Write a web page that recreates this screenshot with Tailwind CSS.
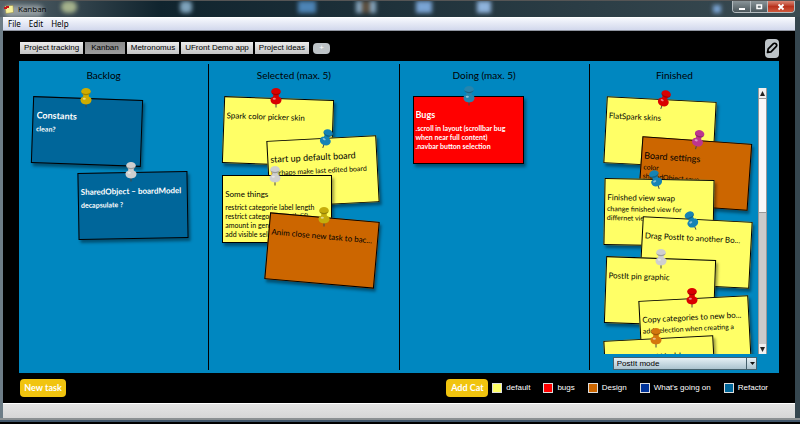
<!DOCTYPE html>
<html lang="en">
<head>
<meta charset="utf-8">
<meta name="viewport" content="width=device-width, initial-scale=1">
<title>Kanban</title>
<script src="https://cdn.jsdelivr.net/npm/@tailwindcss/browser@4"></script>
</head>
<body class="min-h-screen flex flex-col bg-[#14252f] font-['Liberation_Sans',Arial,sans-serif] text-[8px] leading-[10px] text-black">

<svg class="hidden" aria-hidden="true">
  <defs>
    <linearGradient id="shine" x1="0" y1="0" x2="1" y2="1">
      <stop offset="0" stop-color="#fff" stop-opacity=".35"/>
      <stop offset=".45" stop-color="#fff" stop-opacity="0"/>
      <stop offset="1" stop-color="#000" stop-opacity=".45"/>
    </linearGradient>
    <symbol id="pin" viewBox="0 0 14 22">
      <path d="M7 16v4.500" stroke="#444" stroke-width="1"/>
      <path d="M4.600 5h4.800l.6 6H4z" fill="currentColor"/>
      <path d="M4.600 5h4.800l.6 6H4z" fill="url(#shine)"/>
      <path d="M1.500 12.800C1.500 10 4 9.400 7 9.400s5.500.6 5.500 3.400c0 2.800-2.300 4.700-5.500 4.700s-5.500-1.900-5.500-4.700z" fill="currentColor"/>
      <path d="M1.500 12.800C1.500 10 4 9.400 7 9.400s5.500.6 5.500 3.400c0 2.800-2.300 4.700-5.500 4.700s-5.500-1.900-5.500-4.700z" fill="url(#shine)"/>
      <ellipse cx="7" cy="4.600" rx="4.800" ry="3.600" fill="currentColor"/>
      <path d="M2.200 4.800c.3 4.600 9.300 4.600 9.600 0-.8 2.800-8.800 2.800-9.600 0z" fill="#000" opacity=".25"/>
      <ellipse cx="5.300" cy="11.800" rx="1.600" ry="1" fill="#fff" opacity=".5"/>
    </symbol>
  </defs>
</svg>

<header class="relative h-[17px] shrink-0 overflow-hidden border-t border-[#555] bg-linear-to-r from-[#56646b] via-[#10242e] via-20% to-[#3a4b52] flex items-center pl-2">
  <div class="absolute inset-0 blur-[2px]" aria-hidden="true">
    <i class="absolute left-1 top-1 h-3 w-10 rounded-full bg-white/40"></i>
    <i class="absolute left-[61px] top-0 h-3 w-4 rounded-full bg-[#a5b28c]"></i>
    <i class="absolute left-[180px] top-0 h-3 w-3 rounded-sm bg-[#7fa3bc]"></i>
    <i class="absolute left-[298px] top-0 h-3 w-[18px] bg-[#4d84b5]"></i>
    <i class="absolute left-[356px] top-0 h-3 w-5 bg-[#88a7c0]"></i>
    <i class="absolute left-[362px] top-0 h-3 w-2 bg-[#5a4c3c]"></i>
    <i class="absolute left-[416px] top-0 h-3 w-4 bg-[#7aa4d4]"></i>
    <i class="absolute left-[477px] top-0 h-3 w-[14px] bg-[#8fb3dc]"></i>
    <i class="absolute left-[713px] top-1 h-2 w-2 bg-[#7aa4d4]"></i>
  </div>
  <div class="relative flex items-center gap-1">
    <svg class="-ml-1 w-[10px] h-[9px]" viewBox="0 0 10 9" aria-hidden="true"><path d="M1 1l8-.6.5 7L2 8.500z" fill="#f8f29a" stroke="#8f8540" stroke-width=".5"/><path d="M0 2h2V1h3v2H3v1H0z" fill="#c4151c"/></svg>
    <h1 class="font-['Open_Sans',sans-serif] text-black">Kanban</h1>
  </div>
  <div class="absolute right-[5px] top-0 flex h-3 w-[63px] overflow-hidden rounded-b-sm border border-t-0 border-[#b4bcc0] text-white">
    <button class="flex w-[17px] items-center justify-center bg-linear-to-b from-[#8a9599] to-[#4c575c]" aria-label="Minimize"><svg class="h-2 w-2" viewBox="0 0 8 8"><path d="M1 5h6v2H1z" fill="#fff"/></svg></button>
    <button class="flex w-[17px] items-center justify-center border-l border-[#b4bcc0] bg-linear-to-b from-[#8a9599] to-[#4c575c]" aria-label="Maximize"><svg class="h-2 w-2" viewBox="0 0 8 8"><path d="M2 2h4.500v3.500H2z" fill="none" stroke="#fff" stroke-width="1.500"/></svg></button>
    <button class="flex flex-1 items-center justify-center border-l border-[#b4bcc0] bg-linear-to-b from-[#d98674] via-[#b8321d] to-[#d0583c]" aria-label="Close"><svg class="h-2 w-2" viewBox="0 0 8 8"><path d="M1.500 1.500l5 5m0-5l-5 5" stroke="#fff" stroke-width="1.800"/></svg></button>
  </div>
</header>

<div class="flex flex-1 flex-col border-l-[3px] border-r-[5px] border-l-[#6d7d87] border-r-[#35464f]">
  <nav class="flex h-[14px] shrink-0 items-center gap-2 border-y border-t-white border-b-[#9095a0] bg-linear-to-b from-[#f6f8fd] to-[#d2d8ec] pl-[5px] font-['Noto_Sans',sans-serif]" aria-label="Menu">
    <button>File</button><button>Edit</button><button>Help</button>
  </nav>

  <main class="flex flex-1 flex-col bg-black px-4">
    <div class="flex h-[30px] shrink-0 items-center pt-1">
      <div class="flex gap-[2px] pl-px">
        <button class="h-3 bg-linear-to-b from-[#ececec] to-[#c4c4c4] px-1">Project tracking</button>
        <button class="h-3 bg-linear-to-b from-[#8a8a8a] to-[#9c9c9c] px-[6px]">Kanban</button>
        <button class="h-3 bg-linear-to-b from-[#ececec] to-[#c4c4c4] px-1">Metronomus</button>
        <button class="h-3 bg-linear-to-b from-[#ececec] to-[#c4c4c4] px-1">UFront Demo app</button>
        <button class="h-3 bg-linear-to-b from-[#ececec] to-[#c4c4c4] px-1">Project ideas</button>
      </div>
      <button class="ml-1 h-[11px] w-[17px] rounded bg-[#bdc3c7] text-white">+</button>
      <button class="ml-auto flex h-[19px] w-[14px] items-center justify-center rounded bg-[#bdc3c7]" aria-label="Edit board">
        <svg class="h-3 w-3" viewBox="0 0 12 12"><path d="M1.500 10.500l.7-3.600L7.200 1.800c.8-.8 2.200-.7 2.900.1.700.8.700 2 0 2.800L5 9.800z" fill="none" stroke="#000" stroke-width="1.700" stroke-linejoin="round"/><path d="M1 11l.6-3.200 2.600 2.600z" fill="#000"/></svg>
      </button>
    </div>

    <div class="flex min-h-[312px] flex-1 bg-[#0087c0] py-[3px] font-[Lato,sans-serif] text-[7px] leading-[9px]">

      <section class="relative flex-1 border-r border-black">
        <h2 class="pt-1 pr-5 text-center text-[10px] leading-[14px]">Backlog</h2>
        <article class="absolute left-[13px] top-[34px] h-[67px] w-[110px] text-white">
          <div class="h-full rotate-2 overflow-hidden border border-black bg-[#00669a] px-[3px] pt-3 shadow-[2px_3px_3px_#0006]"><h3 class="mb-[3px] truncate text-[9px] font-bold leading-3">Constants</h3><p class="font-bold">clean?</p></div>
          <svg class="absolute left-[47px] -top-[11px] h-[22px] w-[14px] text-[#ceac00]" aria-hidden="true"><use href="#pin"/></svg>
        </article>
        <article class="absolute left-[59px] top-[108px] h-[67px] w-[110px] text-white">
          <div class="h-full -rotate-1 overflow-hidden border border-black bg-[#00669a] px-[2px] pt-3 shadow-[2px_3px_3px_#0006]"><h3 class="mb-[3px] whitespace-nowrap text-[8px] font-bold leading-3">SharedObject – boardModel</h3><p class="font-bold">decapsulate ?</p></div>
          <svg class="absolute left-[46px] -top-[11px] h-[22px] w-[14px] text-[#cfcfcf]" aria-hidden="true"><use href="#pin"/></svg>
        </article>
      </section>

      <section class="relative flex-1 border-r border-black">
        <h2 class="pt-1 pr-5 text-center text-[10px] leading-[14px]">Selected (max. 5)</h2>
        <article class="absolute left-[14px] top-[34px] h-[67px] w-[110px]">
          <div class="h-full rotate-2 overflow-hidden border border-black bg-[#ffff66] px-[2px] pt-3 shadow-[2px_3px_3px_#0006]"><h3 class="truncate text-[8px] leading-3">Spark color picker skin</h3></div>
          <svg class="absolute left-[46px] -top-[11px] h-[22px] w-[14px] text-[#d90000]" aria-hidden="true"><use href="#pin"/></svg>
        </article>
        <article class="absolute left-[59px] top-[74px] h-[67px] w-[110px]">
          <div class="h-full -rotate-3 overflow-hidden border border-black bg-[#ffff66] px-[2px] pt-3 shadow-[2px_3px_3px_#0006]"><h3 class="mb-[3px] truncate text-[9px] leading-3">start up default board</h3><p class="whitespace-nowrap">Perhaps make last edited board</p></div>
          <svg class="absolute left-[51px] -top-[10px] h-[22px] w-[14px] rotate-20 text-[#1683b5]" aria-hidden="true"><use href="#pin"/></svg>
        </article>
        <article class="absolute left-[13px] top-[111px] h-[68px] w-[110px]">
          <div class="h-full overflow-hidden border border-black bg-[#ffff66] px-[2px] pt-3 shadow-[2px_3px_3px_#0006]"><h3 class="mb-[3px] truncate text-[8px] leading-3">Some things</h3><p class="whitespace-nowrap">restrict categorie label length<br>restrict categorie length (if)<br>amount in general<br>add visible selection</p></div>
          <svg class="absolute left-[46px] -top-[10px] h-[22px] w-[14px] text-[#cfcfcf]" aria-hidden="true"><use href="#pin"/></svg>
        </article>
        <article class="absolute left-[58px] top-[153px] h-[67px] w-[110px]">
          <div class="h-full rotate-5 overflow-hidden border border-black bg-[#cc6600] px-[2px] pt-3 shadow-[2px_3px_3px_#0006]"><h3 class="whitespace-nowrap text-[8px] leading-3">Anim close new task to bac...</h3></div>
          <svg class="absolute left-[50px] -top-[11px] h-[22px] w-[14px] text-[#c5ac0c]" aria-hidden="true"><use href="#pin"/></svg>
        </article>
      </section>

      <section class="relative flex-1 border-r border-black">
        <h2 class="pt-1 pr-5 text-center text-[10px] leading-[14px]">Doing (max. 5)</h2>
        <article class="absolute left-[13px] top-[32px] h-[68px] w-[111px] text-white">
          <div class="h-full overflow-hidden border border-black bg-[#ff0000] px-[2px] pt-3 shadow-[2px_3px_3px_#0006]"><h3 class="mb-[3px] truncate text-[9px] font-bold leading-3">Bugs</h3><p class="whitespace-nowrap font-bold">.scroll in layout (scrollbar bug<br>when near full content)<br>.navbar button selection</p></div>
          <svg class="absolute left-[49px] -top-[11px] h-[22px] w-[14px] text-[#2585ae]" aria-hidden="true"><use href="#pin"/></svg>
        </article>
      </section>

      <section class="flex flex-1 flex-col">
        <h2 class="pt-1 pr-5 text-center text-[10px] leading-[14px]">Finished</h2>
        <div class="mt-[6px] mr-3 flex h-[266px]">
          <div class="relative flex-1 overflow-hidden">
            <article class="absolute left-[15px] top-[11px] h-[67px] w-[110px]">
              <div class="h-full rotate-3 overflow-hidden border border-black bg-[#ffff66] px-[2px] pt-3 shadow-[2px_3px_3px_#0006]"><h3 class="truncate text-[8px] leading-3">FlatSpark skins</h3></div>
              <svg class="absolute left-[52px] -top-[10px] h-[22px] w-[14px] rotate-20 text-[#d90000]" aria-hidden="true"><use href="#pin"/></svg>
            </article>
            <article class="absolute left-[50px] top-[52px] h-[67px] w-[110px]">
              <div class="h-full rotate-4 overflow-hidden border border-black bg-[#cc6600] px-[2px] pt-3 shadow-[2px_3px_3px_#0006]"><h3 class="mb-px truncate text-[9px] leading-3">Board settings</h3><p>color<br>sharedObject save</p></div>
              <svg class="absolute left-[51px] -top-[11px] h-[22px] w-[14px] rotate-15 text-[#bd3590]" aria-hidden="true"><use href="#pin"/></svg>
            </article>
            <article class="absolute left-[14px] top-[91px] h-[67px] w-[110px]">
              <div class="h-full rotate-1 overflow-hidden border border-black bg-[#ffff66] px-[2px] pt-3 shadow-[2px_3px_3px_#0006]"><h3 class="mb-px truncate text-[8px] leading-3">Finished view swap</h3><p>change finished view for<br>differnet view</p></div>
              <svg class="absolute left-[45px] -top-[10px] h-[22px] w-[14px] -rotate-20 text-[#1683b5]" aria-hidden="true"><use href="#pin"/></svg>
            </article>
            <article class="absolute left-[51px] top-[131px] h-[67px] w-[110px]">
              <div class="h-full rotate-3 overflow-hidden border border-black bg-[#ffff66] px-[2px] pt-3 shadow-[2px_3px_3px_#0006]"><h3 class="whitespace-nowrap text-[8px] leading-3">Drag PostIt to another Bo...</h3></div>
              <svg class="absolute left-[44px] -top-[9px] h-[22px] w-[14px] -rotate-25 text-[#1683b5]" aria-hidden="true"><use href="#pin"/></svg>
            </article>
            <article class="absolute left-[15px] top-[170px] h-[67px] w-[110px]">
              <div class="h-full rotate-2 overflow-hidden border border-black bg-[#ffff66] px-[2px] pt-3 shadow-[2px_3px_3px_#0006]"><h3 class="truncate text-[8px] leading-3">PostIt pin graphic</h3></div>
              <svg class="absolute left-[49px] -top-[10px] h-[22px] w-[14px] text-[#cfcfcf]" aria-hidden="true"><use href="#pin"/></svg>
            </article>
            <article class="absolute left-[50px] top-[210px] h-[67px] w-[110px]">
              <div class="h-full -rotate-3 overflow-hidden border border-black bg-[#ffff66] px-[2px] pt-3 shadow-[2px_3px_3px_#0006]"><h3 class="mb-px whitespace-nowrap text-[8px] leading-3">Copy categories to new bo...</h3><p class="whitespace-nowrap">add selection when creating a</p></div>
              <svg class="absolute left-[45px] -top-[11px] h-[22px] w-[14px] text-[#d90000]" aria-hidden="true"><use href="#pin"/></svg>
            </article>
            <article class="absolute left-[15px] top-[250px] h-[67px] w-[110px]">
              <div class="h-full -rotate-3 overflow-hidden border border-black bg-[#ffff66] px-[2px] pt-3 shadow-[2px_3px_3px_#0006]"><h3 class="truncate text-center text-[9px] leading-3">Post World</h3></div>
              <svg class="absolute left-[44px] -top-[11px] h-[22px] w-[14px] text-[#d4770d]" aria-hidden="true"><use href="#pin"/></svg>
            </article>
          </div>
          <div class="flex w-[9px] flex-col border-x border-[#999] bg-[#cacaca]">
            <button class="flex h-[10px] items-center justify-center bg-[#f0f0f0]" aria-label="Scroll up"><svg class="h-[5px] w-[5px]" viewBox="0 0 5 5"><path d="M2.500 0L5 5H0z" fill="#222"/></svg></button>
            <div class="h-[115px] border-y border-[#999] bg-[#f8f8f8]"></div>
            <button class="mt-auto flex h-[10px] items-center justify-center bg-[#f0f0f0]" aria-label="Scroll down"><svg class="h-[5px] w-[5px]" viewBox="0 0 5 5"><path d="M0 0h5L2.500 5z" fill="#222"/></svg></button>
          </div>
        </div>
        <div class="relative mt-[3px] mr-[22px] ml-[23px] h-[13px]">
          <select class="block h-full w-full appearance-none border border-[#45606c] bg-linear-to-b from-[#e6f0f5] to-[#abc3cf] pl-[3px] font-['Liberation_Sans',Arial,sans-serif] text-[8px] leading-[10px]" aria-label="View mode"><option>PostIt mode</option></select>
          <span class="pointer-events-none absolute inset-y-0 right-0 flex w-[11px] items-center justify-center border-l border-[#45606c]"><svg class="h-[3px] w-[5px]" viewBox="0 0 5 3"><path d="M0 0h5L2.500 3z" fill="#111"/></svg></span>
        </div>
      </section>
    </div>

    <div class="flex h-[30px] shrink-0 items-center text-white">
      <button class="ml-px h-[18px] w-[46px] rounded bg-[#f1c40f] font-[Lato,sans-serif] text-[9px] font-bold">New task</button>
      <button class="ml-auto h-[18px] w-[42px] rounded bg-[#f1c40f] font-[Lato,sans-serif] text-[9px] font-bold">Add Cat</button>
      <ul class="ml-1 mr-[11px] flex gap-[13px]">
        <li class="flex items-center gap-1"><span class="size-[10px] border border-[#ddd] bg-[#ffff66]"></span>default</li>
        <li class="flex items-center gap-1"><span class="size-[10px] border border-[#ddd] bg-[#ff0000]"></span>bugs</li>
        <li class="flex items-center gap-1"><span class="size-[10px] border border-[#ddd] bg-[#cc6600]"></span>Design</li>
        <li class="flex items-center gap-1"><span class="size-[10px] border border-[#ddd] bg-[#003399]"></span>What's going on</li>
        <li class="flex items-center gap-1"><span class="size-[10px] border border-[#ddd] bg-[#006699]"></span>Refactor</li>
      </ul>
    </div>
  </main>
  <footer class="h-[15px] shrink-0 border-t border-white bg-linear-to-b from-[#e4e4e4] to-[#d6d6d6]"></footer>
</div>
<div class="h-[6px] shrink-0 border-t-2 border-b-2 border-t-[#8b9092] border-b-[#000] bg-[#41566a]"></div>
</body>
</html>
